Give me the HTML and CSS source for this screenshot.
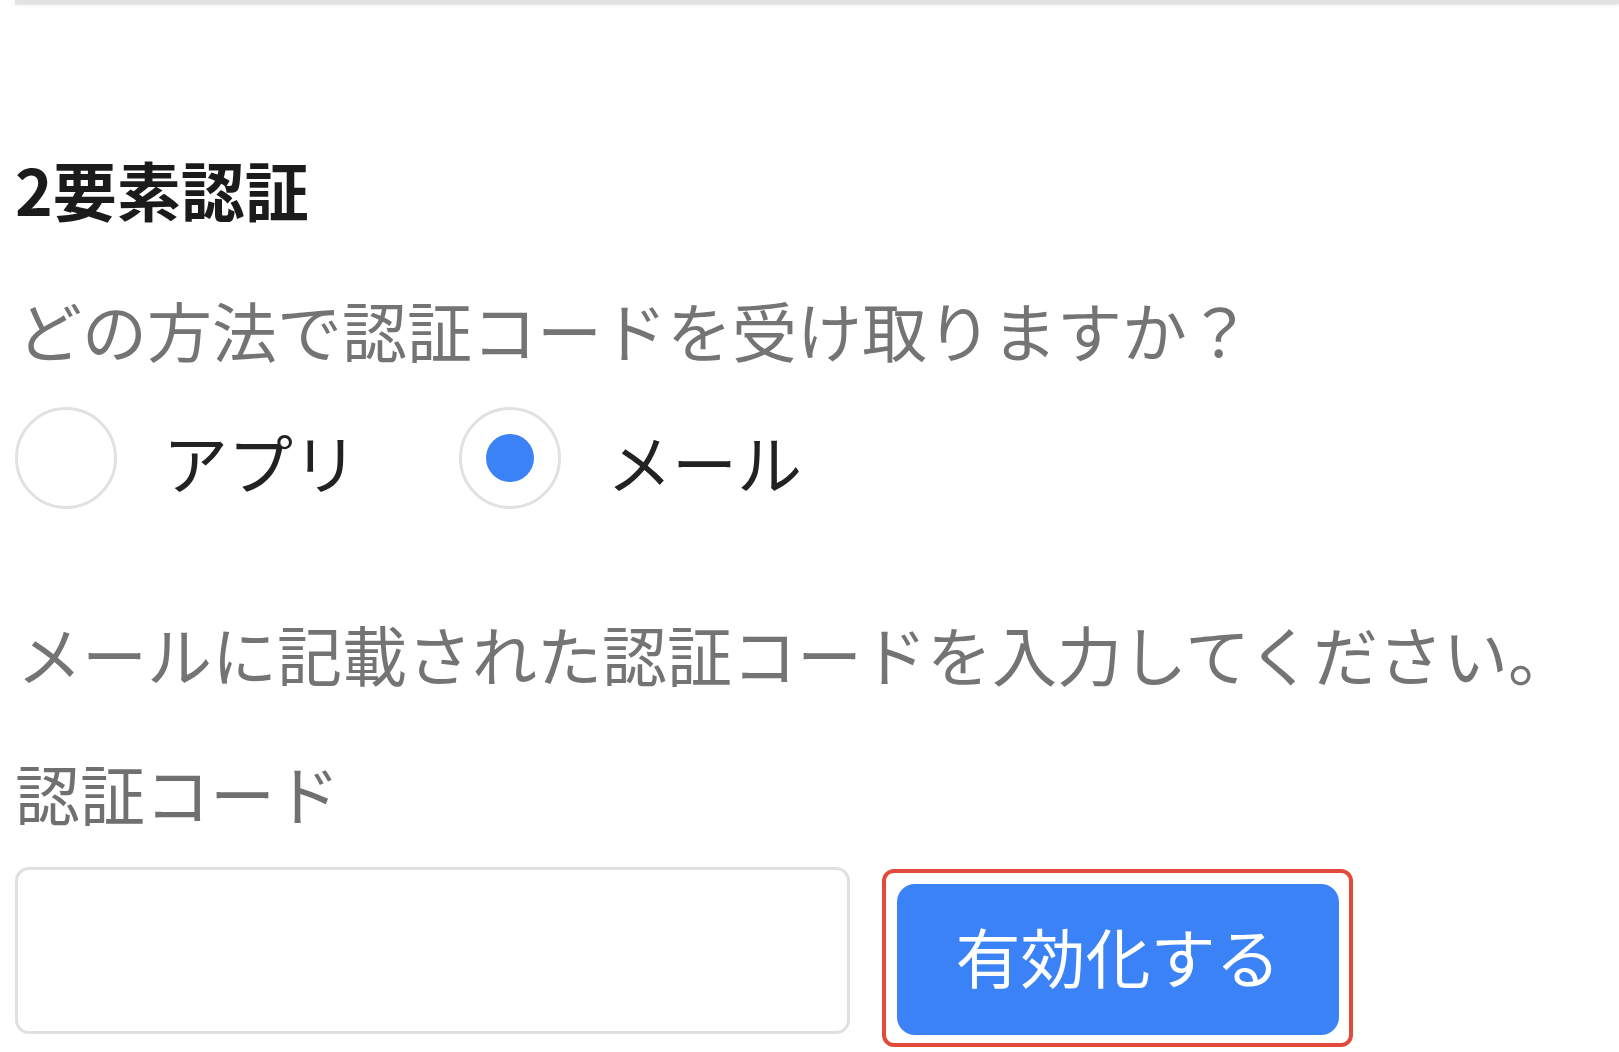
FILE: index.html
```html
<!DOCTYPE html>
<html lang="ja">
<head>
<meta charset="utf-8">
<title>2要素認証</title>
<link rel="stylesheet" href="styles.css">
</head>
<body>
<div class="topbar"></div>
<main class="content">
  <h2 class="title">2要素認証</h2>
  <p class="question">どの方法で認証コードを受け取りますか？</p>
  <div class="radios">
    <label class="option">
      <span class="radio"></span>
      <span class="option-text">アプリ</span>
    </label>
    <label class="option">
      <span class="radio checked"><span class="dot"></span></span>
      <span class="option-text">メール</span>
    </label>
  </div>
  <p class="message">メールに記載された認証コードを入力してください。</p>
  <p class="field-label">認証コード</p>
  <div class="code-row">
    <div class="code-input"></div>
    <div class="highlight">
      <button class="submit" type="button">有効化する</button>
    </div>
  </div>
</main>
</body>
</html>
```

FILE: styles.css
```css
html, body {
  margin: 0;
  padding: 0;
  background: #ffffff;
  font-family: "Noto Sans CJK JP", "Noto Sans", sans-serif;
}

.topbar {
  height: 4px;
  margin-left: 15px;
  background: #e2e2e2;
  box-shadow: 0 1px 3px rgba(0, 0, 0, 0.12);
}

.content {
  padding: 0 15px;
}

.title {
  margin: 144px 0 0;
  font-size: 64px;
  line-height: 80px;
  font-weight: 700;
  color: #1b1b1b;
}

.question {
  margin: 61px 0 0;
  font-size: 65px;
  line-height: 80px;
  font-weight: 400;
  color: #747474;
  padding-left: 2px;
}

.radios {
  display: flex;
  align-items: center;
  margin-top: 38px;
  height: 102px;
}

.option {
  display: flex;
  align-items: center;
}

.option + .option {
  margin-left: 101px;
}

.radio {
  width: 96px;
  height: 96px;
  border: 3px solid #e1e1e1;
  border-radius: 50%;
  display: flex;
  align-items: center;
  justify-content: center;
  flex: none;
}

.dot {
  width: 48px;
  height: 48px;
  border-radius: 50%;
  background: #3b82f6;
}

.option-text {
  margin-left: 46px;
  font-size: 65px;
  line-height: 80px;
  color: #222222;
  padding-top: 6px;
}

.message {
  margin: 104px 0 0;
  font-size: 65px;
  line-height: 80px;
  color: #747474;
  padding-left: 2px;
}

.field-label {
  margin: 59px 0 0;
  font-size: 65px;
  line-height: 80px;
  color: #707070;
}

.code-row {
  display: flex;
  align-items: flex-start;
  gap: 32px;
  margin-top: 35px;
}

.code-input {
  width: 829px;
  height: 161px;
  border: 3px solid #e0e0e0;
  border-radius: 14px;
  background: #ffffff;
  flex: none;
}

.highlight {
  margin-top: 2px;
  border: 4px solid #e24b3b;
  border-radius: 12px;
  padding: 11px 10px 8px 11px;
}

.submit {
  display: block;
  width: 442px;
  height: 151px;
  border: none;
  border-radius: 18px;
  background: #3b82f6;
  color: #ffffff;
  font-family: "Noto Sans CJK JP", "Noto Sans", sans-serif;
  font-size: 65px;
  line-height: 80px;
  padding: 0 0 10px;
}
```
